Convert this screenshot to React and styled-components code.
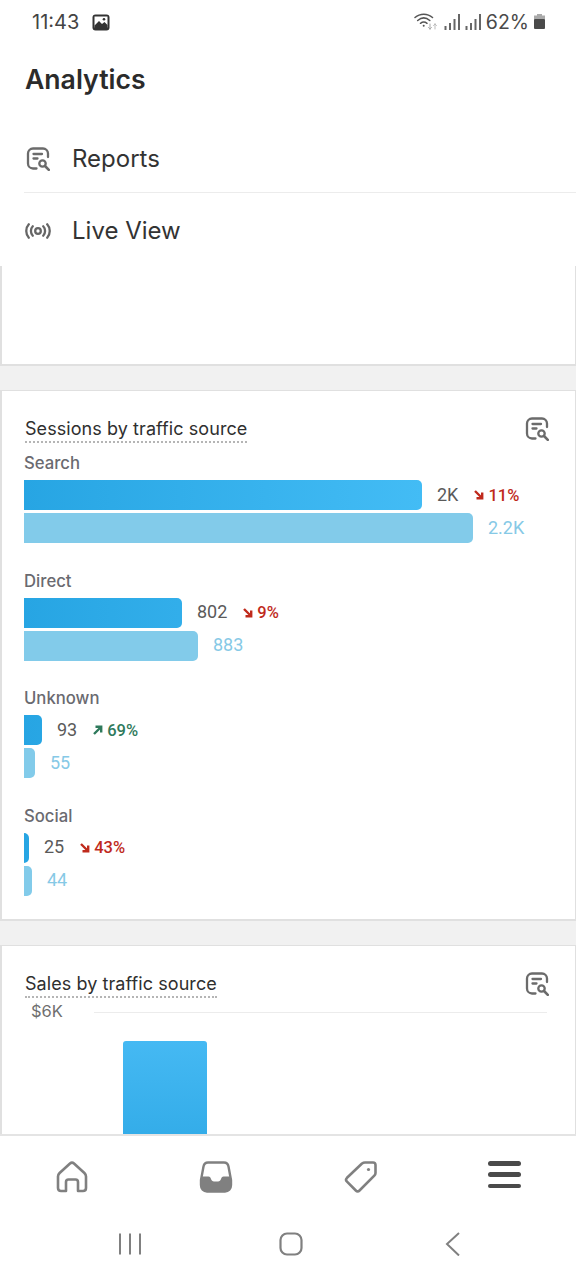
import { createGlobalStyle, styled } from "styled-components";

const GlobalStyle = createGlobalStyle`
  html, body {
    margin: 0;
    padding: 0;
    background: #fff;
  }
  * {
    box-sizing: border-box;
  }
  body {
    font-family: Inter, "Noto Sans", sans-serif;
  }
`;

const sources = [
  { name: "Search", now: 398, prev: 449, value: "2K", prevValue: "2.2K", change: "11%", up: false },
  { name: "Direct", now: 158, prev: 174, value: "802", prevValue: "883", change: "9%", up: false },
  { name: "Unknown", now: 18, prev: 11, value: "93", prevValue: "55", change: "69%", up: true },
  { name: "Social", now: 5, prev: 8, value: "25", prevValue: "44", change: "43%", up: false },
];

const ReportIcon = ({ size = 24 }) => (
  <svg width={size} height={size} viewBox="0 0 24 24" fill="none" stroke="#6b6b6b" strokeWidth="2.300" strokeLinecap="round">
    <path d="M10.500 21.500H7A5 5 0 0 1 2 16.500V6.500A5 5 0 0 1 7 1.500H17A5 5 0 0 1 22 6.500V10" />
    <path d="M7.500 7H16M7.500 11.500H11.500" />
    <circle cx="16.500" cy="16.500" r="3.200" />
    <path d="M19.500 19.500L22.800 22.800" strokeWidth="2.600" />
  </svg>
);

const LiveIcon = () => (
  <svg width="26" height="16" viewBox="0 0 26 16" fill="none" stroke="#666" strokeWidth="2.300" strokeLinecap="round">
    <circle cx="13" cy="8" r="2.800" />
    <path d="M7.800 3.300C5.300 5.800 5.300 10.200 7.800 12.700M18.200 3.300C20.700 5.800 20.700 10.200 18.200 12.700" />
    <path d="M3.800 1.300C0.400 5 0.400 11 3.800 14.700M22.200 1.300C25.600 5 25.600 11 22.200 14.700" />
  </svg>
);

const ArrowIcon = ({ up }) => (
  <svg width="10" height="10" viewBox="0 0 10 10" fill="none" stroke="currentColor" strokeWidth="2.400">
    {up ? <path d="M1 9L8 2M2.500 1.800H8.200V7.500" /> : <path d="M1 1L8 8M2.500 8.200H8.200V2.500" />}
  </svg>
);

const Source = ({ source }) => (
  <SourceGroup>
    <SourceName>{source.name}</SourceName>
    <BarRow>
      <Bar style={{ width: source.now }} />
      <BarValue>{source.value}</BarValue>
      <Change $up={source.up}>
        <ArrowIcon up={source.up} />
        {source.change}
      </Change>
    </BarRow>
    <BarRow>
      <Bar $previous style={{ width: source.prev }} />
      <BarValue $previous>{source.prevValue}</BarValue>
    </BarRow>
  </SourceGroup>
);

const App = () => {
  return (
    <Screen>
      <GlobalStyle />
      <StatusBar>
        <StatusLeft>
          <span>11:43</span>
          <svg width="18" height="17" viewBox="0 0 18 17">
            <rect x="0.500" y="0.500" width="17" height="16" rx="3" fill="#333" />
            <rect x="2.500" y="2.500" width="13" height="11" fill="#fff" />
            <path d="M2.500 11.500L7 7L10 10L12.500 8L15.500 11V14.500H2.500Z" fill="#333" />
            <circle cx="12" cy="5.200" r="1.300" fill="#333" />
          </svg>
        </StatusLeft>
        <StatusRight>
          <svg width="25" height="20" viewBox="0 0 25 20" fill="none" stroke="#555" strokeWidth="1.500" strokeLinecap="round">
            <path d="M1 5.500C6 1 13.500 1 18.500 5.500M3.700 8.500C7.500 5.200 12 5.200 15.800 8.500M6.500 11.300C8.500 9.700 11 9.700 13 11.300" />
            <circle cx="9.700" cy="13.800" r="1" fill="#555" stroke="none" />
            <path d="M16 12V17M14.500 15.500L16 17M17.500 15.500L16 17" stroke="#aaa" strokeWidth="1" />
            <path d="M21 17V12M19.500 13.500L21 12M22.500 13.500L21 12" stroke="#bbb" strokeWidth="1" />
          </svg>
          <Signal />
          <Signal />
          <Percent>62%</Percent>
          <svg width="11" height="15" viewBox="0 0 11 15">
            <rect x="3" y="0" width="5" height="2" fill="#aaa" />
            <rect x="0" y="1.500" width="11" height="4" fill="#aaa" />
            <rect x="0" y="5" width="11" height="10" rx="1" fill="#4a4a4a" />
          </svg>
        </StatusRight>
      </StatusBar>

      <Heading>Analytics</Heading>
      <MenuRow>
        <MenuIcon>
          <ReportIcon />
        </MenuIcon>
        Reports
      </MenuRow>
      <MenuRow $last>
        <MenuIcon>
          <LiveIcon />
        </MenuIcon>
        Live View
      </MenuRow>

      <Feed>
        <TopCard />
        <Card>
          <CardHeader>
            <CardTitle>Sessions by traffic source</CardTitle>
            <ReportIcon />
          </CardHeader>
          <Sources>
            {sources.map((source) => (
              <Source key={source.name} source={source} />
            ))}
          </Sources>
        </Card>
        <Card>
          <CardHeader $compact>
            <CardTitle>Sales by traffic source</CardTitle>
            <ReportIcon />
          </CardHeader>
          <AxisRow>
            <AxisLabel>$6K</AxisLabel>
            <AxisLine />
          </AxisRow>
          <ChartBar />
        </Card>
      </Feed>

      <TabBar>
        <svg width="34" height="34" viewBox="0 0 34 34" fill="none" stroke="#808080" strokeWidth="2.600" strokeLinejoin="round">
          <path d="M3 25V16.500C3 15 3.600 14 4.600 13L15 3.500C16.200 2.400 17.800 2.400 19 3.500L29.400 13C30.400 14 31 15 31 16.500V28C31 30 30 31 28 31H23V22C23 20.500 22 19.500 20.500 19.500H13.500C12 19.500 11 20.500 11 22V31H6C4 31 3 30 3 28Z" />
        </svg>
        <svg width="34" height="34" viewBox="0 0 34 34">
          <path d="M9 2.500H25C27.500 2.500 29 4 29.500 6.500L32 20V25C32 29 29.500 31.500 26 31.500H8C4.500 31.500 2 29 2 25V20L4.500 6.500C5 4 6.500 2.500 9 2.500Z" fill="none" stroke="#808080" strokeWidth="2.400" />
          <path d="M2 18C2 17 3 16.500 4 16.500H9.500C11 16.500 11.500 17.500 12 19C12.500 20.500 13.500 21.500 15 21.500H19C20.500 21.500 21.500 20.500 22 19C22.500 17.500 23 16.500 24.500 16.500H30C31 16.500 32 17 32 18V25C32 29 29.500 31.500 26 31.500H8C4.500 31.500 2 29 2 25Z" fill="#808080" />
        </svg>
        <svg width="34" height="34" viewBox="0 0 34 34" fill="none" stroke="#808080" strokeWidth="2.600" strokeLinejoin="round">
          <path d="M21 2.500H29C30.500 2.500 31.500 3.500 31.500 5V13C31.500 14 31 15 30.300 15.700L15.500 30.500C14.300 31.700 13 31.700 11.800 30.500L3 21.700C1.800 20.500 1.800 19 3 17.800L18 3.500C19 2.800 20 2.500 21 2.500Z" />
          <circle cx="24.500" cy="9.500" r="1.600" fill="#808080" stroke="none" />
        </svg>
        <Hamburger>
          <span />
          <span />
          <span />
        </Hamburger>
      </TabBar>

      <SystemNav>
        <svg width="24" height="24" viewBox="0 0 24 24" stroke="#808080" strokeWidth="2">
          <path d="M2 1.500V22.500M12 1.500V22.500M22 1.500V22.500" />
        </svg>
        <svg width="24" height="24" viewBox="0 0 24 24" fill="none" stroke="#808080" strokeWidth="2.200">
          <rect x="1.500" y="1.500" width="21" height="21" rx="6.500" />
        </svg>
        <svg width="20" height="24" viewBox="0 0 20 24" fill="none" stroke="#808080" strokeWidth="2">
          <path d="M19 1L7 12L19 23.500" />
        </svg>
      </SystemNav>
    </Screen>
  );
};

const Signal = () => (
  <svg width="16" height="16" viewBox="0 0 16 16" fill="#666">
    <rect x="0.500" y="12" width="2" height="4" />
    <rect x="5" y="9" width="2" height="7" />
    <rect x="9.500" y="5" width="2" height="11" />
    <rect x="14" y="0" width="2" height="16" />
  </svg>
);

const Screen = styled.div`
  width: 576px;
  height: 1280px;
  overflow: hidden;
  display: flex;
  flex-direction: column;
  background: #fff;
`;

const StatusBar = styled.div`
  height: 44px;
  padding: 0 31px 0 32px;
  display: flex;
  align-items: center;
  justify-content: space-between;
  color: #444;
`;

const StatusLeft = styled.div`
  display: flex;
  align-items: center;
  gap: 13px;
  font-size: 20px;
`;

const StatusRight = styled.div`
  display: flex;
  align-items: center;
  gap: 5px;
  margin-top: -1px;
`;

const Percent = styled.span`
  font-size: 19.5px;
  color: #4a4a4a;
`;

const Heading = styled.h1`
  margin: 0;
  height: 70px;
  padding: 17px 0 0 25px;
  font-size: 26.6px;
  line-height: 36px;
  font-weight: 600;
  color: #2b2b2b;
`;

const MenuRow = styled.div`
  margin-left: 24px;
  height: ${(p) => (p.$last ? "73px" : "79px")};
  padding-top: ${(p) => (p.$last ? "2px" : "11px")};
  display: flex;
  align-items: center;
  gap: 20px;
  font-size: 24px;
  color: #333;
  border-bottom: ${(p) => (p.$last ? "none" : "1px solid #ececec")};
`;

const MenuIcon = styled.span`
  width: 28px;
  display: flex;
  justify-content: center;
`;

const Feed = styled.div`
  height: 868px;
  overflow: hidden;
  background: #f1f1f1;
  display: flex;
  flex-direction: column;
  gap: 24px;
`;

const TopCard = styled.div`
  height: 100px;
  flex: none;
  background: #fff;
  border: 2px solid #e0e0e0;
  border-top: none;
  border-right-width: 1px;
`;

const Card = styled.section`
  flex: none;
  background: #fff;
  border: 2px solid #e0e0e0;
  border-right-width: 1px;
  border-top-width: 1px;
  padding: 26px 0 23px 22px;
`;

const CardHeader = styled.div`
  display: flex;
  justify-content: space-between;
  align-items: flex-start;
  padding-right: 26px;
  height: ${(p) => (p.$compact ? "28px" : "36px")};
`;

const CardTitle = styled.h2`
  margin: -1px 0 0 1px;
  font-size: 18px;
  letter-spacing: 0.07px;
  line-height: 25px;
  font-weight: 400;
  color: #2f2f2f;
  border-bottom: 2px dotted #b5b5b5;
`;

const Sources = styled.div`
  display: flex;
  flex-direction: column;
  gap: 27.67px;
`;

const SourceGroup = styled.div`
  display: flex;
  flex-direction: column;
  gap: 3px;
`;

const SourceName = styled.div`
  font-size: 16.7px;
  line-height: 20px;
  font-weight: 500;
  color: #6a6a70;
  margin-bottom: 4px;
`;

const BarRow = styled.div`
  display: flex;
  align-items: center;
  height: 30px;
`;

const Bar = styled.div`
  height: 30px;
  border-radius: 0 5px 5px 0;
  background: ${(p) =>
    p.$previous ? "#82cbea" : "linear-gradient(90deg, #27a5e3, #43bcf5) 0 0 / 398px 100%"};
`;

const BarValue = styled.span`
  margin-left: 15px;
  padding-bottom: 2px;
  font-family: Roboto, sans-serif;
  font-size: 18px;
  font-weight: 400;
  color: ${(p) => (p.$previous ? "#86c9e6" : "#5a5a5a")};
`;

const Change = styled.span`
  margin-left: 16px;
  display: flex;
  align-items: center;
  gap: 4px;
  font-family: Roboto, sans-serif;
  font-size: 16.5px;
  font-weight: 500;
  color: ${(p) => (p.$up ? "#2f7a5c" : "#bf2a1c")};
`;

const AxisRow = styled.div`
  display: flex;
  align-items: center;
  padding-right: 28px;
  height: 22px;
`;

const AxisLabel = styled.span`
  width: 70px;
  padding-left: 7px;
  font-size: 16.5px;
  color: #6f6f6f;
`;

const AxisLine = styled.div`
  flex: 1;
  height: 1px;
  margin-top: 3px;
  background: #ececec;
`;

const ChartBar = styled.div`
  margin: 19px 0 0 99px;
  width: 84px;
  height: 120px;
  border-radius: 3px 3px 0 0;
  background: linear-gradient(180deg, #45b9f3, #2fa9e6);
`;

const TabBar = styled.nav`
  height: 78px;
  flex: none;
  padding: 24px 55px 0 55px;
  display: flex;
  justify-content: space-between;
  align-items: flex-start;
  background: #fff;
  border-top: 2px solid #e4e4e4;
  position: relative;
  z-index: 1;
`;

const Hamburger = styled.div`
  width: 33px;
  height: 27px;
  margin-top: 1px;
  display: flex;
  flex-direction: column;
  justify-content: space-between;
  span {
    height: 4.500px;
    border-radius: 3px;
    background: #4a4a4a;
  }
`;

const SystemNav = styled.div`
  flex: 1;
  padding: 20px 0 0 118px;
  display: grid;
  grid-template-columns: 24px 24px 20px;
  column-gap: 137px;
  align-items: start;
  background: #fff;
`;

export default App;
